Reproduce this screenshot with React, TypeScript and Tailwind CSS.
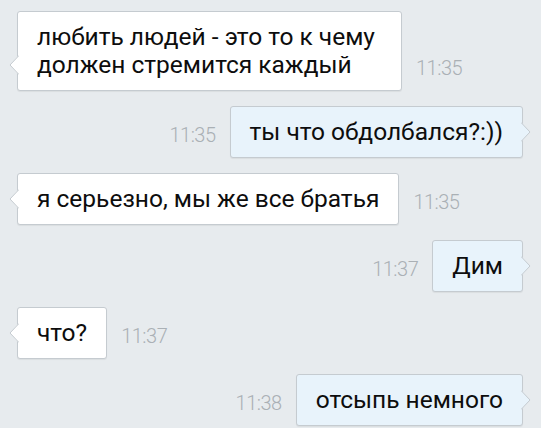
type Msg = { text: string; time: string; out?: boolean }

const messages: Msg[] = [
  { text: 'любить людей - это то к чему должен стремится каждый', time: '11:35' },
  { text: 'ты что обдолбался?:))', time: '11:35', out: true },
  { text: 'я серьезно, мы же все братья', time: '11:35' },
  { text: 'Дим', time: '11:37', out: true },
  { text: 'что?', time: '11:37' },
  { text: 'отсыпь немного', time: '11:38', out: true },
]

function Tail({ out }: { out?: boolean }) {
  const fill = out ? '#e8f3fb' : '#ffffff'
  return (
    <svg
      width="10"
      height="20"
      viewBox="0 0 10 20"
      className={`absolute bottom-[15px] ${out ? '-right-[9px] -scale-x-100' : '-left-[9px]'}`}
      aria-hidden="true"
    >
      <polygon points="10,0 1,10 10,20" fill={fill} />
      <polyline points="10,0.5 1,10 10,19.5" fill="none" stroke="#c5cbd0" strokeWidth="1" />
    </svg>
  )
}

function Time({ value }: { value: string }) {
  return (
    <span className="mb-[11px] text-[20px] leading-[24px] font-light text-[#aab0b5] tracking-[-0.5px] shrink-0">
      {value}
    </span>
  )
}

export default function App() {
  return (
    <div
      className="w-[541px] h-[428px] overflow-hidden bg-[#e7ebee] pt-[11px] px-[17px] flex flex-col gap-[15px]"
      style={{ fontFamily: 'Roboto, "Noto Sans", sans-serif' }}
    >
      {messages.map((m, i) => (
        <div key={i} className={`flex items-end gap-[14px] ${m.out ? 'justify-end pr-px' : ''}`}>
          {m.out && <Time value={m.time} />}
          <div
            className={`relative max-w-[385px] rounded-[3px] border border-[#c5cbd0] px-[19px] py-[11px] text-[24.5px] leading-[28px] text-[#0d0d0d] shadow-[0_1px_1px_rgba(0,0,0,0.06)] ${
              m.out ? 'bg-[#e8f3fb]' : 'bg-white'
            }`}
          >
            {m.text}
            <Tail out={m.out} />
          </div>
          {!m.out && <Time value={m.time} />}
        </div>
      ))}
    </div>
  )
}
